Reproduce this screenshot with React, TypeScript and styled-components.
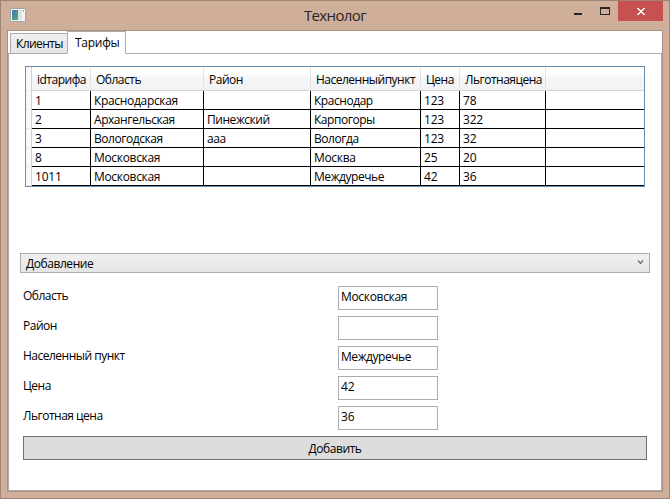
import React from 'react';
import styled, { createGlobalStyle } from 'styled-components';

const GlobalStyle = createGlobalStyle`
  *, *::before, *::after { box-sizing: border-box; }
  html, body { margin: 0; padding: 0; overflow: hidden; }
  body { font: 12px/16px "Open Sans", "Noto Sans", sans-serif; letter-spacing: -0.44px; color: #000; }
  input, button { font: inherit; letter-spacing: inherit; color: inherit; }
`;

const Window = styled.div`
  width: 670px;
  height: 499px;
  display: flex;
  flex-direction: column;
  padding: 0 6px 6px;
  background: #cfae9a;
  border: 1px solid #a08374;
`;

const TitleBar = styled.header`
  height: 29px;
  flex: none;
  display: grid;
  grid-template-columns: 105px 1fr 105px;
`;

const AppIcon = styled.svg`
  display: block;
  margin: 7px 0 0 3px;
`;

const Title = styled.h1`
  margin: 0;
  text-align: center;
  font-size: 15px;
  font-weight: 400;
  line-height: 28px;
  letter-spacing: -0.62px;
  color: #2b2522;
`;

const WindowControls = styled.div`
  display: flex;
  justify-content: flex-end;
  align-items: flex-start;
`;

const ControlButton = styled.button<{ $close?: boolean }>`
  width: ${p => (p.$close ? 45 : 27)}px;
  height: 20px;
  padding: 0;
  border: 0;
  display: flex;
  background: ${p => (p.$close ? '#c75050' : 'transparent')};
`;

const Client = styled.main`
  flex: 1;
  display: flex;
  flex-direction: column;
  background: #fff;
  border: 1px solid #ab8f80;
`;

const TabStrip = styled.nav`
  display: flex;
  align-items: flex-end;
  height: 23px;
  padding-left: 2px;
  margin-bottom: -1px;
  position: relative;
`;

const Tab = styled.button<{ $active?: boolean }>`
  width: ${p => (p.$active ? 59 : 58)}px;
  height: ${p => (p.$active ? 23 : 21)}px;
  margin-left: ${p => (p.$active ? -1 : 0)}px;
  padding: ${p => (p.$active ? '0 0 0 7px' : '0 0 0 5px')};
  text-align: left;
  white-space: nowrap;
  letter-spacing: ${p => (p.$active ? -0.25 : -0.6)}px;
  line-height: ${p => (p.$active ? 22 : 20)}px;
  background: ${p => (p.$active ? '#fff' : 'linear-gradient(#f0f0f0, #e5e5e5)')};
  border: 1px solid #acacac;
  border-bottom-color: ${p => (p.$active ? '#fff' : '#acacac')};
`;

const Page = styled.section`
  flex: 1;
  display: flex;
  flex-direction: column;
  border: 1px solid #acacac;
  padding: 12px 11px 0;
`;

const DataGrid = styled.div`
  width: 620px;
  height: 121px;
  margin-left: 5px;
  border: 1px solid #688caf;
`;

const GridRow = styled.div`
  display: grid;
  grid-template-columns: 6px 59px 113px 107px 110px 39px 86px 1fr;
`;

const HeaderCell = styled.div`
  height: 24px;
  padding-left: 5px;
  line-height: 25px;
  letter-spacing: -0.5px;
  white-space: nowrap;
  background: linear-gradient(#fff 0, #fdfdfe 35%, #f5f6f8 42%, #f1f2f4 100%);
  border-right: 1px solid #dfe1e4;
  border-bottom: 1px solid #cfd1d4;
  &:last-child { border-right: 0; }
`;

const RowHeader = styled.div`
  border-right: 1px solid #d0d2d5;
  border-bottom: 1px solid #ececee;
  background: #fafafa;
`;

const Cell = styled.div<{ $tracking: number }>`
  height: 19px;
  padding-left: 3px;
  line-height: 19px;
  letter-spacing: ${p => p.$tracking}px;
  white-space: nowrap;
  border-right: 1px solid #000;
  border-bottom: 1px solid #000;
  &:last-child { border-right: 0; }
`;

const ModeSelect = styled.button`
  width: 630px;
  height: 20px;
  margin-top: 66px;
  padding: 2px 5px 0 5px;
  display: flex;
  justify-content: space-between;
  align-items: center;
  line-height: 18px;
  background: linear-gradient(#f0f0f0, #e5e5e5);
  border: 1px solid #acacac;
`;

const Chevron = styled.svg`
  flex: none;
  margin-bottom: 3px;
`;

const Form = styled.form`
  display: flex;
  flex-direction: column;
  gap: 6px;
  margin: 13px 0 0 3px;
`;

const Field = styled.label`
  display: grid;
  grid-template-columns: 315px 100px;
  height: 24px;
  line-height: 19px;
  letter-spacing: -0.5px;
`;

const TextBox = styled.input<{ $tracking: number }>`
  width: 100px;
  height: 24px;
  padding: 0 2px 4px;
  letter-spacing: ${p => p.$tracking}px;
  background: #fff;
  border: 1px solid #abadb3;
  border-radius: 0;
  outline: 0;
`;

const SubmitButton = styled.button`
  width: 624px;
  height: 24px;
  padding: 0;
  line-height: 24px;
  background: #ddd;
  border: 1px solid #707070;
`;

const trackingFor = (text: string) => {
  if (/^\d+$/.test(text)) return -0.2;
  return /^(Моск|Краснодарская)/.test(text) ? -0.32 : -0.45;
};

const columns = ['idтарифа', 'Область', 'Район', 'Населенныйпункт', 'Цена', 'Льготнаяцена', ''];

const rows = [
  ['1', 'Краснодарская', '', 'Краснодар', '123', '78', ''],
  ['2', 'Архангельская', 'Пинежский', 'Карпогоры', '123', '322', ''],
  ['3', 'Вологодская', 'ааа', 'Вологда', '123', '32', ''],
  ['8', 'Московская', '', 'Москва', '25', '20', ''],
  ['1011', 'Московская', '', 'Междуречье', '42', '36', ''],
];

const fields = [
  ['Область', 'Московская'],
  ['Район', ''],
  ['Населенный пункт', 'Междуречье'],
  ['Цена', '42'],
  ['Льготная цена', '36'],
];

export default function App() {
  return (
    <>
      <GlobalStyle />
      <Window>
        <TitleBar>
          <AppIcon width="16" height="14" viewBox="0 0 16 14">
            <defs>
              <linearGradient id="pane" x1="0" y1="0" x2="1" y2="1">
                <stop offset="0" stopColor="#4873a8" />
                <stop offset="1" stopColor="#4fae7e" />
              </linearGradient>
            </defs>
            <rect x="0.5" y="0.5" width="15" height="13" rx="0.5" fill="#f4f6f7" stroke="#a3a4a5" />
            <rect x="2" y="2" width="6" height="10" fill="url(#pane)" />
            <rect x="8" y="2" width="4" height="10" fill="#dde2e4" />
            <rect x="13" y="2" width="1" height="2" fill="#76b89b" />
          </AppIcon>
          <Title>Технолог</Title>
          <WindowControls>
            <ControlButton aria-label="Свернуть">
              <svg width="27" height="20"><rect x="10" y="12" width="8" height="2" fill="#252525" /></svg>
            </ControlButton>
            <ControlButton aria-label="Развернуть">
              <svg width="27" height="20">
                <path d="M9 6h10v8H9zM10 8v5h8V8z" fill="#252525" fillRule="evenodd" />
              </svg>
            </ControlButton>
            <ControlButton $close aria-label="Закрыть">
              <svg width="45" height="20" shapeRendering="crispEdges">
                <path d="M19 7h2v1h1v1h2V8h1V7h2v1h-1v1h-1v1h-1v1h1v1h1v1h1v1h-2v-1h-1v-1h-2v1h-1v1h-2v-1h1v-1h1v-1h1v-1h-1V9h-1V8h-1z" fill="#fff" />
              </svg>
            </ControlButton>
          </WindowControls>
        </TitleBar>
        <Client>
          <TabStrip>
            <Tab>Клиенты</Tab>
            <Tab $active>Тарифы</Tab>
          </TabStrip>
          <Page>
            <DataGrid>
              <GridRow>
                <RowHeader />
                {columns.map((c, i) => <HeaderCell key={i}>{c}</HeaderCell>)}
              </GridRow>
              {rows.map(row => (
                <GridRow key={row[0]}>
                  <RowHeader />
                  {row.map((v, i) => <Cell key={i} $tracking={trackingFor(v)}>{v}</Cell>)}
                </GridRow>
              ))}
            </DataGrid>
            <ModeSelect>
              Добавление
              <Chevron width="7" height="5" viewBox="0 0 7 5">
                <path d="M1 0.5L3.5 3.3L6 0.5" fill="none" stroke="#606060" strokeWidth="1.2" />
              </Chevron>
            </ModeSelect>
            <Form>
              {fields.map(([label, value]) => (
                <Field key={label}>
                  {label}
                  <TextBox defaultValue={value} $tracking={trackingFor(value)} />
                </Field>
              ))}
              <SubmitButton type="button">Добавить</SubmitButton>
            </Form>
          </Page>
        </Client>
      </Window>
    </>
  );
}
